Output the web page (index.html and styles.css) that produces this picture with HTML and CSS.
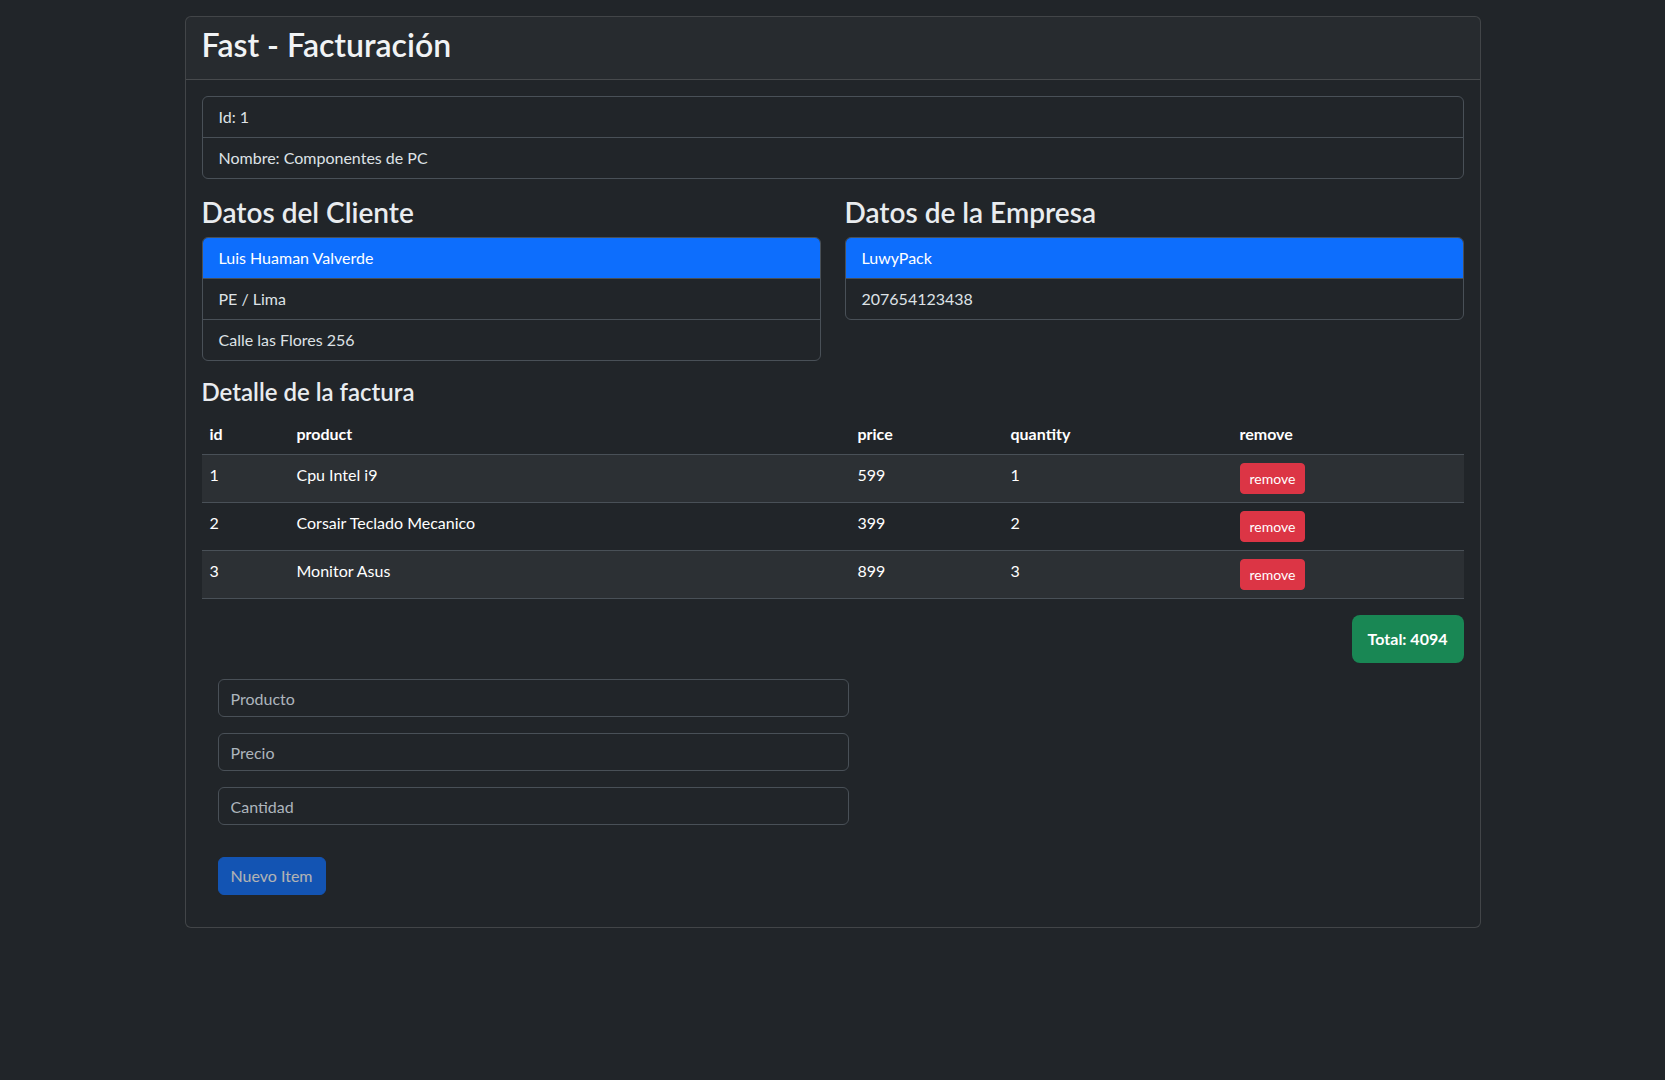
FILE: index.html
```html
<!DOCTYPE html>
<html lang="es">
<head>
<meta charset="utf-8">
<title>Fast - Facturación</title>
<link rel="stylesheet" href="styles.css">
</head>
<body>
<div class="container">
  <div class="card">
    <div class="card-header">
      <h2 class="title">Fast - Facturación</h2>
    </div>
    <div class="card-body">
      <ul class="list-group mb-3">
        <li class="list-item">Id: 1</li>
        <li class="list-item">Nombre: Componentes de PC</li>
      </ul>
      <div class="row mb-3">
        <div class="col">
          <h3 class="h3">Datos del Cliente</h3>
          <ul class="list-group">
            <li class="list-item active">Luis Huaman Valverde</li>
            <li class="list-item">PE / Lima</li>
            <li class="list-item">Calle las Flores 256</li>
          </ul>
        </div>
        <div class="col">
          <h3 class="h3">Datos de la Empresa</h3>
          <ul class="list-group">
            <li class="list-item active">LuwyPack</li>
            <li class="list-item">207654123438</li>
          </ul>
        </div>
      </div>
      <h4 class="h4">Detalle de la factura</h4>
      <table class="table">
        <thead>
          <tr>
            <th class="c-id">id</th>
            <th class="c-product">product</th>
            <th class="c-price">price</th>
            <th class="c-qty">quantity</th>
            <th class="c-remove">remove</th>
          </tr>
        </thead>
        <tbody>
          <tr class="striped">
            <td>1</td><td>Cpu Intel i9</td><td>599</td><td>1</td>
            <td><button class="btn btn-danger">remove</button></td>
          </tr>
          <tr>
            <td>2</td><td>Corsair Teclado Mecanico</td><td>399</td><td>2</td>
            <td><button class="btn btn-danger">remove</button></td>
          </tr>
          <tr class="striped">
            <td>3</td><td>Monitor Asus</td><td>899</td><td>3</td>
            <td><button class="btn btn-danger">remove</button></td>
          </tr>
        </tbody>
      </table>
      <div class="total-row">
        <span class="total">Total: 4094</span>
      </div>
      <form class="item-form">
        <input class="form-control" type="text" placeholder="Producto">
        <input class="form-control" type="text" placeholder="Precio">
        <input class="form-control" type="text" placeholder="Cantidad">
        <button type="button" class="btn btn-primary" disabled>Nuevo Item</button>
      </form>
    </div>
  </div>
</div>
</body>
</html>
```

FILE: styles.css
```css
* { box-sizing: border-box; }

html, body {
  margin: 0;
  padding: 0;
}

body {
  background: #212529;
  color: #dee2e6;
  font-family: Lato, "Noto Sans", "Liberation Sans", sans-serif;
  font-size: 16px;
  line-height: 24px;
  min-height: 1080px;
}

.container {
  max-width: 1320px;
  margin: 0 auto;
  padding: 0 12px;
}

.card {
  margin-top: 16px;
  border: 1px solid rgba(255, 255, 255, 0.15);
  border-radius: 6px;
  background: #212529;
}

.card-header {
  padding: 8px 16px;
  background: rgba(255, 255, 255, 0.03);
  border-bottom: 1px solid rgba(255, 255, 255, 0.15);
  border-radius: 5px 5px 0 0;
}

.title {
  margin: 0 0 8px;
  padding-top: 2px;
  height: 38px;
  font-size: 32px;
  font-weight: 600;
  line-height: 36px;
  color: #f1f3f5;
}

.card-body {
  padding: 16px;
}

.mb-3 { margin-bottom: 16px; }

.list-group {
  list-style: none;
  margin-top: 0;
  padding: 0;
  border: 1px solid #495057;
  border-radius: 6px;
  overflow: hidden;
}

.list-group.mb-3 { margin-bottom: 16px; }
.list-group:not(.mb-3) { margin-bottom: 0; }

.list-item {
  padding: 8px 16px;
  line-height: 24px;
  color: #dee2e6;
}

.list-item + .list-item {
  border-top: 1px solid #495057;
}

.list-item.active {
  background: #0d6efd;
  color: #fff;
  margin: -1px -1px 0;
  padding: 9px 17px 8px;
}

.row {
  display: grid;
  grid-template-columns: 1fr 1fr;
  column-gap: 24px;
}

.h3 {
  margin: 0 0 8px;
  padding-top: 1px;
  height: 34px;
  font-size: 28px;
  font-weight: 600;
  line-height: 33px;
  color: #e9ecef;
}

.h4 {
  margin: 0 0 8px;
  padding-top: 1px;
  height: 29px;
  font-size: 24px;
  font-weight: 600;
  line-height: 28px;
  color: #e9ecef;
}

.table {
  width: 100%;
  border-collapse: collapse;
  margin-bottom: 16px;
  color: #fff;
}

.table th,
.table td {
  text-align: left;
  vertical-align: top;
  padding: 8px;
  line-height: 24px;
  border-bottom: 1px solid #495057;
}

.table th { font-weight: 700; }

.c-id { width: 87px; }
.c-product { width: 561px; }
.c-price { width: 153px; }
.c-qty { width: 229px; }

.table tr.striped td {
  background: #2c3034;
}

.btn {
  font-family: inherit;
  border: 1px solid transparent;
  cursor: pointer;
}

.btn-danger {
  background: #dc3545;
  color: #fff;
  font-size: 14px;
  line-height: 21px;
  padding: 4px 9px;
  border-radius: 4px;
  border-color: #dc3545;
}

.total-row {
  display: flex;
  justify-content: flex-end;
}

.total {
  background: #198754;
  color: #fff;
  font-weight: 700;
  font-size: 16px;
  line-height: 24px;
  padding: 12px 16px;
  border-radius: 8px;
}

.item-form {
  width: 663px;
  padding: 16px;
  display: flex;
  flex-direction: column;
  align-items: flex-start;
}

.form-control {
  width: 100%;
  height: 38px;
  padding: 6px 12px;
  font-family: inherit;
  font-size: 16px;
  line-height: 24px;
  color: #dee2e6;
  background: #212529;
  border: 1px solid #495057;
  border-radius: 6px;
  margin-bottom: 16px;
}

.form-control::placeholder {
  color: #adb5bd;
  opacity: 1;
}

.btn-primary {
  margin-top: 16px;
  background: #0d6efd;
  border-color: #0d6efd;
  color: #fff;
  font-size: 16px;
  line-height: 24px;
  padding: 6px 12px;
  border-radius: 6px;
}

.btn-primary:disabled {
  opacity: 0.65;
  cursor: default;
}
```
